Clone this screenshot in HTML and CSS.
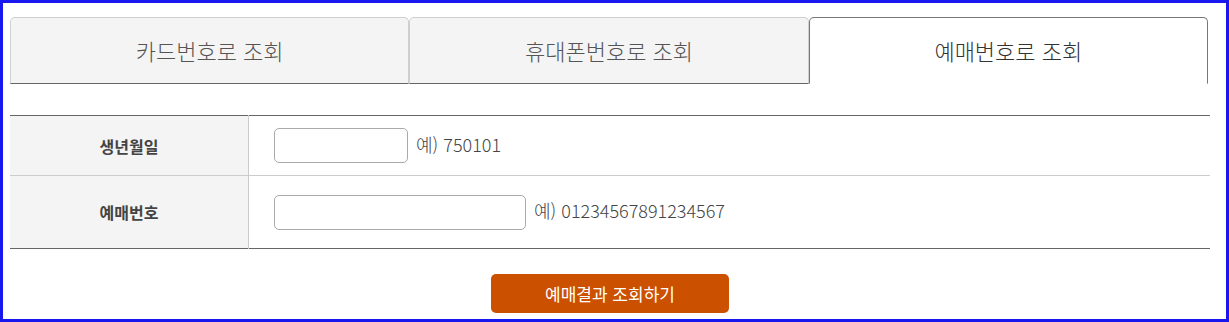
FILE: index.html
```
<!DOCTYPE html>
<html lang="ko">

<head>
    <meta charset="UTF-8">
    <meta name="viewport" content="width=device-width, initial-scale=1.0">
    <title>예매확인</title>
    <link rel="stylesheet" href="styles.css">
</head>

<body>
    <div class="wrap">
        <ul class="tabs">
            <li>카드번호로 조회</li>
            <li>휴대폰번호로 조회</li>
            <li class="active">예매번호로 조회</li>
        </ul>
        <table class="form">
            <tr class="row-birth">
                <th>생년월일</th>
                <td><input type="text" class="ipt-short"><span class="hint">예) 750101</span></td>
            </tr>
            <tr class="row-num">
                <th>예매번호</th>
                <td><input type="text" class="ipt-long"><span class="hint">예) 01234567891234567</span></td>
            </tr>
        </table>
        <div class="btn-area">
            <button type="button" class="btn">예매결과 조회하기</button>
        </div>
    </div>
</body>

</html>
```
FILE: styles.css
```
html,
body {
    margin: 0;
    padding: 0;
}

body {
    font-family: "Noto Sans CJK KR", "Noto Sans", sans-serif;
}

ul {
    margin: 0;
    padding: 0;
    list-style: none;
}

.wrap {
    width: 1229px;
    height: 322px;
    box-sizing: border-box;
    border: 3px solid #1818ee;
    padding: 14px 0 0 7px;
    background-color: #fff;
}

.tabs {
    display: flex;
    width: 1198px;
}

.tabs li {
    flex: 1;
    height: 63px;
    padding-bottom: 2px;
    border: 1px solid #cfcfcf;
    border-bottom-color: #666;
    border-radius: 5px 5px 0 0;
    background-color: #f4f4f4;
    display: flex;
    align-items: center;
    justify-content: center;
    font-size: 22px;
    font-weight: 300;
    color: #555;
}

.tabs .active {
    background-color: #fff;
    border-color: #777;
    border-bottom-color: #fff;
    color: #333;
}

.form {
    width: 1200px;
    margin-top: 31px;
    border-collapse: collapse;
    border-top: 1px solid #666;
    border-bottom: 1px solid #666;
}

.form th {
    width: 238px;
    padding: 0;
    background-color: #f4f4f4;
    border-right: 1px solid #ccc;
    font-size: 16px;
    font-weight: bold;
    color: #444;
}

.form td {
    padding: 0 0 0 25px;
}

.row-birth th,
.row-birth td {
    height: 59px;
    border-bottom: 1px solid #ccc;
}

.row-num th,
.row-num td {
    height: 72px;
}

.form input {
    height: 35px;
    box-sizing: border-box;
    border: 1px solid #aaa;
    border-radius: 5px;
    vertical-align: middle;
    margin: 0;
}

.ipt-short {
    width: 134px;
}

.ipt-long {
    width: 252px;
}

.hint {
    display: inline-block;
    vertical-align: middle;
    margin-left: 8px;
    padding-bottom: 4px;
    font-size: 18px;
    font-weight: 300;
    line-height: 1;
    color: #444;
}

.btn-area {
    width: 1200px;
    margin-top: 25px;
    text-align: center;
}

.btn {
    width: 238px;
    height: 39px;
    border: 0;
    border-radius: 5px;
    background-color: #cb5000;
    color: #fff;
    font-family: "Noto Sans CJK KR", "Noto Sans", sans-serif;
    font-size: 17px;
}
```
